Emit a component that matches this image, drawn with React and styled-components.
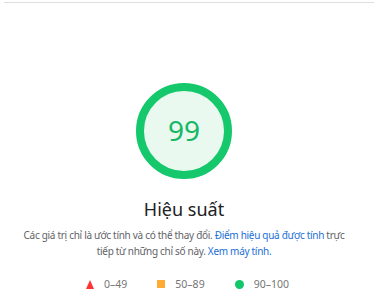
import React from 'react'
import styled, { createGlobalStyle } from 'styled-components'

const GlobalStyle = createGlobalStyle`
  body {
    margin: 0;
    background: #fff;
    font-family: "Noto Sans", "Open Sans", sans-serif;
  }
`

const Page = styled.div`
  width: 374px;
  height: 302px;
  overflow: hidden;
  padding-top: 2px;
  box-sizing: border-box;
`

const Rule = styled.div`
  margin-left: 4px;
  border-top: 1px solid #dedede;
`

const Section = styled.div`
  width: 360px;
  margin-left: 4px;
  display: flex;
  flex-direction: column;
  align-items: center;
  padding-top: 80px;
`

const Gauge = styled.div`
  position: relative;
  width: 96px;
  height: 96px;
  display: flex;
  align-items: center;
  justify-content: center;
`

const GaugeSvg = styled.svg`
  position: absolute;
  inset: 0;
`

const Score = styled.div`
  position: relative;
  font-size: 28px;
  color: #17b765;
  line-height: 1;
  margin-top: -2px;
`

const Title = styled.div`
  margin-top: 18px;
  font-size: 18px;
  color: #212121;
  line-height: 24px;
`

const Description = styled.p`
  margin: 6px 0 0;
  font-size: 10px;
  letter-spacing: -0.3px;
  white-space: nowrap;
  line-height: 16px;
  color: #5f6368;
  text-align: center;
`

const Link = styled.a`
  color: #1a6fd8;
  text-decoration: none;
`

const Legend = styled.div`
  display: flex;
  gap: 30px;
  margin-top: 18px;
  margin-left: 7px;
`

const LegendItem = styled.div`
  display: flex;
  align-items: center;
  gap: 10px;
  font-size: 10.5px;
  color: #757575;
`

const Square = styled.span`
  width: 8px;
  height: 8px;
  background: #ffaa33;
`

const Dot = styled.span`
  width: 9px;
  height: 9px;
  border-radius: 50%;
  background: #11c76a;
`

const Triangle = styled.span`
  width: 0;
  height: 0;
  border-left: 4.5px solid transparent;
  border-right: 4.5px solid transparent;
  border-bottom: 9px solid #f33;
`

export default function App() {
  return (
    <Page>
      <GlobalStyle />
      <Rule />
      <Section>
        <Gauge>
          <GaugeSvg viewBox="0 0 96 96" width="96" height="96">
            <circle cx="48" cy="48" r="44" fill="#e9f9f0" stroke="#15c86b" strokeWidth="8" />
          </GaugeSvg>
          <Score>99</Score>
        </Gauge>
        <Title>Hiệu suất</Title>
        <Description>
          Các giá trị chỉ là ước tính và có thể thay đổi. <Link>Điểm hiệu quả được tính</Link> trực
          <br />
          tiếp từ những chỉ số này. <Link>Xem máy tính.</Link>
        </Description>
        <Legend>
          <LegendItem><Triangle />0–49</LegendItem>
          <LegendItem><Square />50–89</LegendItem>
          <LegendItem><Dot />90–100</LegendItem>
        </Legend>
      </Section>
    </Page>
  )
}
